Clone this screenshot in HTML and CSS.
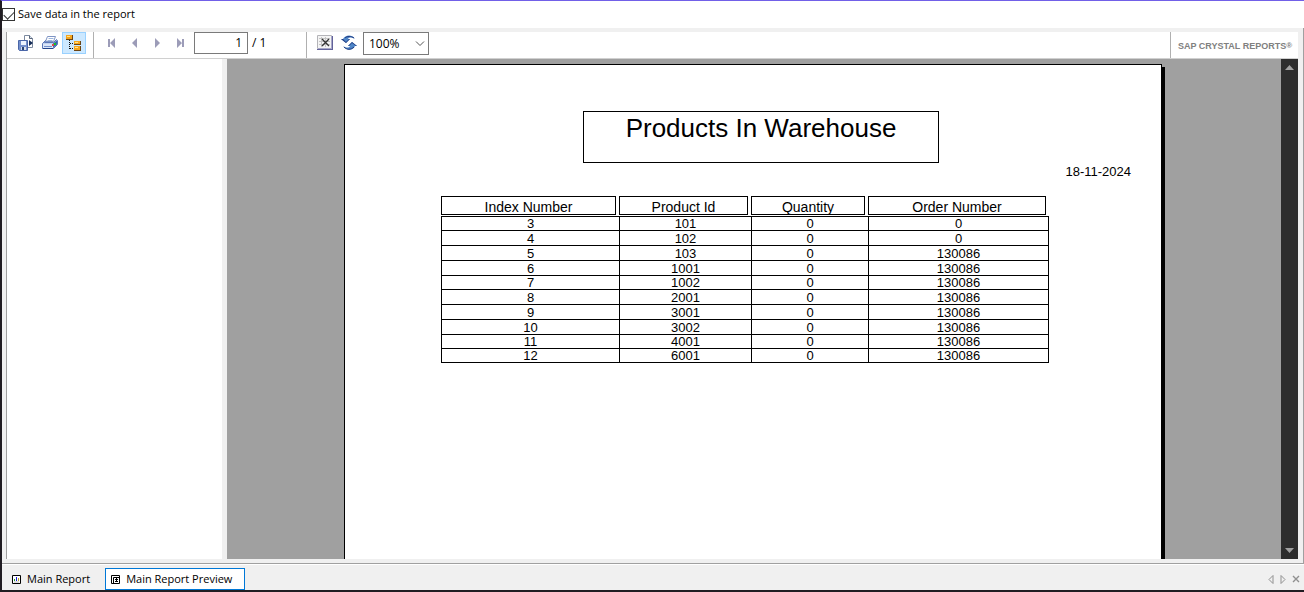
FILE: index.html
```html
<!DOCTYPE html>
<html lang="en">
<head>
<meta charset="utf-8">
<meta name="viewport" content="width=device-width, initial-scale=1">
<title>Main Report Preview</title>
<link rel="stylesheet" href="styles.css">
</head>
<body>
<div class="window">
  <div class="options">
    <label class="option"><input class="tick" type="checkbox" checked><span>Save data in the report</span></label>
  </div>
  <main class="frame">
    <div class="viewer">
      <div class="toolbar">
        <div class="group">
          <button class="tool" type="button" aria-label="Export report">
            <svg width="16" height="16" viewBox="0 0 16 16"><path d="M6.500 .5h5l3 3v9h-8z" fill="#fff" stroke="#7c8aa0"/><path d="M11.500 .5v3h3" fill="#d8e1ed" stroke="#596579"/><path d="M11 5l4 3-4 3z" fill="#162d58"/><path d="M.5 5.500h9v10h-8l-1-1z" fill="#7490cc" stroke="#4a66a8"/><path d="M3 6h5v4H3z" fill="#edf4ff"/><path d="M3 12h5v3H3z" fill="#d9e0ed"/><path d="M4 12h2v3H4z" fill="#284477"/></svg>
          </button>
          <button class="tool" type="button" aria-label="Print report">
            <svg width="16" height="16" viewBox="0 0 16 16"><path d="M5.500 1.500h8l-2 5h-8z" fill="#fff" stroke="#7f95c4"/><path d="M6.500 3.500h5M5.500 5.500h5" stroke="#9cb6df"/><path d="M.5 8.500l3-3-1 2h9l3-3 1 1v4l-4 4H.5z" fill="#a9bfe8" stroke="#5c78b8"/><path d="M1 8.500h10v4.500H1z" fill="#dbe6f8"/><path d="M11 8.500l4-3v4l-4 3.500z" fill="#3e62b4"/><path d="M2 11h8v1H2z" fill="#7391cd"/><path d="M12 8h2v2h-2z" fill="#17c428"/><path d="M10 9h2v2h-2z" fill="#e04a4a"/><path d="M1 13.500h10" stroke="#24458a"/></svg>
          </button>
          <button class="tool tool-on" type="button" aria-label="Toggle group tree" aria-pressed="true">
            <svg width="16" height="16" viewBox="0 0 16 16"><path d="M3.500 5v10M4 8.500h4M4 13.500h4" fill="none" stroke="#111" stroke-dasharray="1 1"/><path d="M0 0h7v5H0zM8 6h7v4H8zM8 11h7v5H8z" fill="#6b4516"/><path d="M0 0h6v4H0zM8 6h6v3H8zM8 11h6v4H8z" fill="#f5a51d"/><path d="M1 1.500h3M9 7.500h3M9 12.500h3" stroke="#ffe389"/></svg>
          </button>
        </div>
        <div class="group group-pages">
          <button class="nav" type="button" aria-label="First page"><svg width="8" height="10" viewBox="0 0 8 10"><path d="M0 1h2v8H0zM7 0v10L2 5z"/></svg></button>
          <button class="nav" type="button" aria-label="Previous page"><svg width="8" height="10" viewBox="0 0 8 10"><path d="M6 0v10L1 5z"/></svg></button>
          <button class="nav" type="button" aria-label="Next page"><svg width="8" height="10" viewBox="0 0 8 10"><path d="M1 0v10l5-5z"/></svg></button>
          <button class="nav" type="button" aria-label="Last page"><svg width="8" height="10" viewBox="0 0 8 10"><path d="M0 0v10l5-5zM5 1h2v8H5z"/></svg></button>
          <input class="page-number" type="text" value="1" aria-label="Page number">
          <span>/ 1</span>
        </div>
        <div class="group group-view">
          <button class="tool" type="button" aria-label="Close current view">
            <svg width="16" height="16" viewBox="0 0 16 16"><path d="M.5 .5h14v13H.5z" fill="#f4f4f4" stroke="#b4b4b8"/><path d="M15.500 1v14M0 14.500h16" stroke="#62629a"/><path d="M14.500 1v13M1 13.500h14" stroke="#a8a8c8"/><path d="M2 3.500h11M2 6.500h11M2 9.500h11M4.500 2v10M8.500 2v10" stroke="#c4c4c4"/><path d="M5 4l7 7M12 4l-7 7" stroke="#333" stroke-width="1.400"/></svg>
          </button>
          <button class="tool" type="button" aria-label="Refresh">
            <svg width="16" height="16" viewBox="0 0 16 16"><path d="M0 4h2c2-4 9-5 12 0-3-2-6-2-7 0h2L5 8z" fill="#4f86c8"/><path d="M0 4h2l3 3 3-3h1L5 8z" fill="#213b80"/><path d="M4 3c2-2 6-2 9 0" fill="none" stroke="#213b80"/><path d="M16 11h-2c-2 5-9 5-12 0 3 2 6 2 7 0H7l4-4z" fill="#4f86c8"/><path d="M16 11h-1l-4-3-3 3H7l4-4z" fill="#213b80"/><path d="M3 12c3 3 7 3 10 0" fill="none" stroke="#213b80"/></svg>
          </button>
          <span class="zoom">
            <select class="zoom-select" aria-label="Zoom"><option>100%</option></select>
            <svg class="zoom-arrow" width="10" height="6" viewBox="0 0 10 6"><path d="M1 .5l4 4 4-4" fill="none" stroke="#555"/></svg>
          </span>
        </div>
        <div class="brand">SAP CRYSTAL REPORTS<span class="mark">®</span></div>
      </div>
      <div class="body">
        <aside class="tree" aria-label="Group tree"></aside>
        <div class="canvas">
          <article class="page">
            <h1 class="title">Products In Warehouse</h1>
            <p class="date">18-11-2024</p>
            <table class="report">
              <colgroup><col class="col-index"><col class="col-product"><col class="col-quantity"><col class="col-order"></colgroup>
              <thead><tr><th><div class="head">Index Number</div></th><th><div class="head">Product Id</div></th><th><div class="head">Quantity</div></th><th><div class="head">Order Number</div></th></tr></thead>
              <tbody>
                <tr><td>3</td><td>101</td><td>0</td><td>0</td></tr>
                <tr><td>4</td><td>102</td><td>0</td><td>0</td></tr>
                <tr><td>5</td><td>103</td><td>0</td><td>130086</td></tr>
                <tr><td>6</td><td>1001</td><td>0</td><td>130086</td></tr>
                <tr><td>7</td><td>1002</td><td>0</td><td>130086</td></tr>
                <tr><td>8</td><td>2001</td><td>0</td><td>130086</td></tr>
                <tr><td>9</td><td>3001</td><td>0</td><td>130086</td></tr>
                <tr><td>10</td><td>3002</td><td>0</td><td>130086</td></tr>
                <tr><td>11</td><td>4001</td><td>0</td><td>130086</td></tr>
                <tr><td>12</td><td>6001</td><td>0</td><td>130086</td></tr>
              </tbody>
            </table>
          </article>
        </div>
        <div class="scrollbar">
          <button class="scroll-button" type="button" aria-label="Scroll up"><svg width="9" height="5" viewBox="0 0 9 5"><path d="M0 5h9L4.500 0z"/></svg></button>
          <button class="scroll-button" type="button" aria-label="Scroll down"><svg width="9" height="5" viewBox="0 0 9 5"><path d="M0 0h9L4.500 5z"/></svg></button>
        </div>
      </div>
    </div>
  </main>
  <footer class="tabs">
    <button class="tab" type="button">
      <svg width="9" height="9" viewBox="0 0 9 9"><path d="M.5 .5h8v8h-8z" fill="#fff" stroke="#000"/><path d="M2.500 4v2" stroke="#1a9a2a"/><path d="M4.500 2v4" stroke="#1818d8"/><path d="M6.500 3v3" stroke="#b8a020"/><path d="M2 7h5" stroke="#bbb"/></svg>
      Main Report
    </button>
    <button class="tab tab-on" type="button">
      <svg width="9" height="9" viewBox="0 0 9 9"><path d="M.5 .5h8v8h-8z" fill="#fff" stroke="#000"/><path d="M2.500 8V2.500H8M4 4.500h3M4 6.500h3M5.500 3v4" fill="none" stroke="#000"/></svg>
      Main Report Preview
    </button>
    <div class="tab-controls">
      <button class="tab-control" type="button" aria-label="Previous tab"><svg width="6" height="9" viewBox="0 0 6 9"><path d="M5 .5v8l-4-4z"/></svg></button>
      <button class="tab-control" type="button" aria-label="Next tab"><svg width="6" height="9" viewBox="0 0 6 9"><path d="M1 .5v8l4-4z"/></svg></button>
      <button class="tab-control" type="button" aria-label="Close tab"><svg width="8" height="8" viewBox="0 0 8 8"><path d="M1 1l6 6M7 1L1 7" stroke-width="1.400"/></svg></button>
    </div>
  </footer>
</div>
</body>
</html>
```
FILE: styles.css
```css
* { box-sizing: border-box; }

body {
  margin: 0;
  color: #000;
  font: 12px/16px "Open Sans", "Noto Sans", sans-serif;
}

button, input, select {
  margin: 0;
  padding: 0;
  border: 0;
  color: inherit;
  background: none;
  font: inherit;
}

svg { display: block; flex: none; }

.window {
  display: flex;
  flex-direction: column;
  height: 100vh;
  border-top: 1px solid #7160e8;
  border-bottom: 2px solid #201c22;
  border-left: 2px solid #201c22;
  background: #f0f0f0;
}

.options { flex: none; height: 27px; background: #fff; }

.option {
  display: inline-flex;
  align-items: center;
  gap: 3px;
  height: 26px;
  font-size: 11px;
}

.tick {
  appearance: none;
  width: 13px;
  height: 13px;
  border: 1px solid #333;
  background: #fff;
}

.tick:checked::before {
  content: "";
  display: block;
  width: 9px;
  height: 5px;
  margin: 2px 1px;
  border: solid #333;
  border-width: 0 0 1px 1px;
  transform: rotate(-45deg);
}

.frame {
  flex: 1;
  display: flex;
  min-height: 0;
  padding: 4px 5px 4px 4px;
  border-right: 1px solid #a0a0a0;
  border-bottom: 1px solid #a0a0a0;
}

.viewer {
  flex: 1;
  display: flex;
  flex-direction: column;
  min-width: 0;
  border-left: 1px solid #a0a0a0;
  background: #fff;
}

.toolbar {
  flex: none;
  display: flex;
  height: 27px;
  border-bottom: 1px solid #d0d0d0;
}

.group { display: flex; align-items: flex-start; padding: 0 7px; }

.group-pages {
  width: 213px;
  padding: 0 0 0 6px;
  border-left: 1px solid #b0b0b0;
  line-height: 22px;
}

.group-view {
  flex: 1;
  padding: 0 6px;
  border-left: 1px solid #b0b0b0;
}

.tool, .nav {
  display: flex;
  align-items: center;
  justify-content: center;
  width: 24px;
  height: 22px;
}

.tool-on { border: 1px solid #99d1ff; background: #cce8ff; }

.nav { width: 23px; fill: #9c9cb8; }

.page-number {
  width: 54px;
  height: 22px;
  margin: 0 4px 0 2px;
  padding: 0 5px;
  border: 1px solid #7a7a7a;
  background: #fff;
  text-align: right;
}

.zoom { display: grid; align-items: center; margin-left: 2px; }

.zoom-select {
  grid-area: 1 / 1;
  appearance: none;
  width: 66px;
  height: 23px;
  padding: 0 5px;
  border: 1px solid #7a7a7a;
  background: #fff;
  font-size: 12px;
}

.zoom-arrow {
  grid-area: 1 / 1;
  justify-self: end;
  margin-right: 4px;
  pointer-events: none;
}

.brand {
  display: flex;
  align-items: center;
  justify-content: center;
  min-width: 128px;
  padding: 2px 4px 0 5px;
  border-left: 1px solid #b0b0b0;
  color: #808080;
  font: bold 9px/12px "Liberation Sans", Arial, sans-serif;
}

.mark { font-size: 8px; }

.body { flex: 1; display: flex; min-height: 0; }

.tree { flex: none; width: 220px; border-right: 5px solid #f0f0f0; }

.canvas {
  flex: 1;
  min-width: 0;
  padding: 5px 6px 0 4px;
  overflow: hidden;
  background: #a0a0a0;
}

.page {
  max-width: 818px;
  min-height: 1056px;
  margin: 0 auto;
  padding: 46px 30px 0 96px;
  border: 1px solid #000;
  background: #fff;
  box-shadow: 3px 3px 0 #000;
  font-family: "Liberation Sans", Arial, sans-serif;
}

.title {
  width: 356px;
  height: 52px;
  margin: 0 0 0 142px;
  padding-top: 1px;
  border: 1px solid #000;
  font-size: 26px;
  font-weight: 400;
  line-height: 30px;
  text-align: center;
}

.date {
  margin: 1px 0 16px;
  font-size: 13px;
  line-height: 16px;
  text-align: right;
}

.report {
  width: 608px;
  table-layout: fixed;
  border-spacing: 0;
  font-size: 13px;
  line-height: 13px;
  text-align: center;
}

.col-index { width: 178px; }
.col-product { width: 132px; }
.col-quantity { width: 117px; }
.col-order { width: 181px; }

.report th { height: 20px; padding: 0 3px 1px 0; font-weight: 400; }

.head {
  height: 19px;
  padding-top: 3px;
  overflow: hidden;
  border: 1px solid #000;
  font-size: 14px;
  line-height: 14px;
}

.report td {
  height: 15px;
  padding: 0;
  border-top: 1px solid #000;
  border-left: 1px solid #000;
}

.report tbody tr:nth-child(4n + 1) td { height: 14px; }
.report td:last-child { border-right: 1px solid #000; }
.report tbody tr:last-child td { border-bottom: 1px solid #000; }

.scrollbar {
  flex: none;
  display: flex;
  flex-direction: column;
  justify-content: space-between;
  width: 17px;
  background: #2d2d2d;
}

.scroll-button {
  display: flex;
  align-items: center;
  justify-content: center;
  width: 17px;
  height: 17px;
  fill: #a0a0a0;
}

.tabs {
  flex: none;
  display: flex;
  align-items: center;
  height: 26px;
  padding: 3px 4px 0 2px;
  border-top: 1px solid #fff;
}

.tab {
  display: flex;
  align-items: center;
  gap: 6px;
  height: 22px;
  padding: 0 15px 0 8px;
  font-size: 11px;
}

.tab-on {
  padding: 0 12px 0 5px;
  border: 1px solid #0078d7;
  background: #fff;
}

.tab-controls { display: flex; gap: 6px; margin-left: auto; }

.tab-control svg { fill: none; stroke: #909090; }
```
